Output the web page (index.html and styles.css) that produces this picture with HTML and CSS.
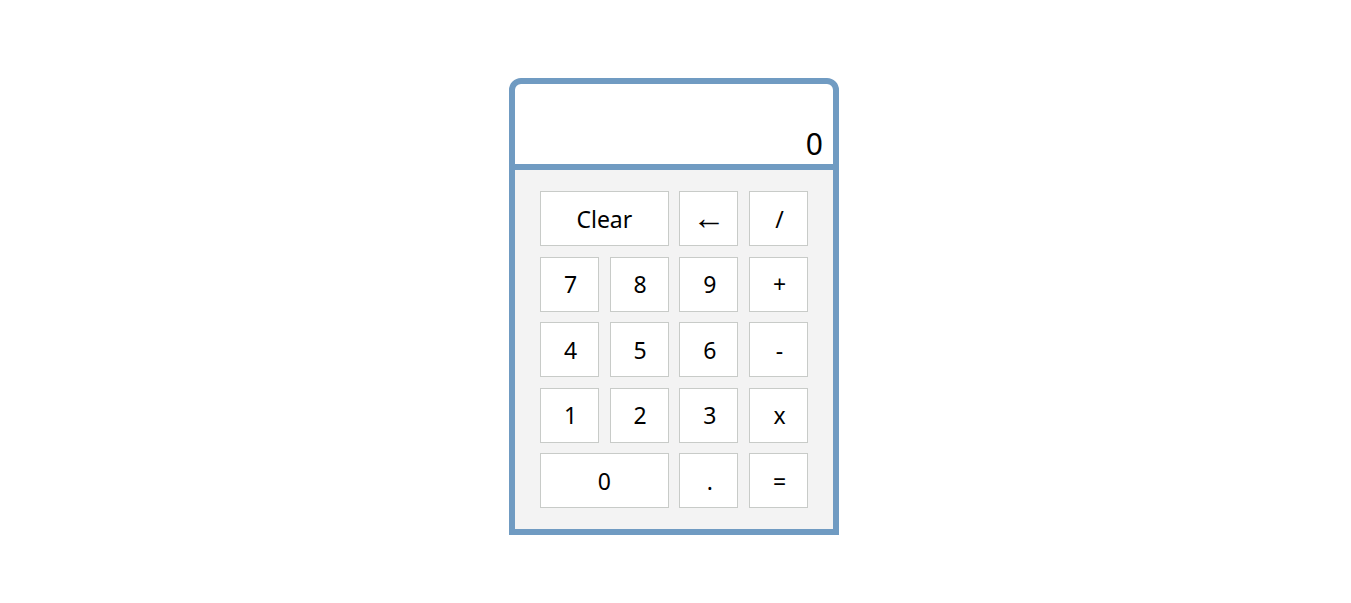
FILE: index.html
```html
<!DOCTYPE html>
<html>
<head>
<meta charset="utf-8">
<link rel="stylesheet" href="styles.css">
</head>
<body>
<div class="page">
  <div class="calc">
    <div class="display">0</div>
    <div class="keys">
      <button class="key wide">Clear</button>
      <button class="key arrow">←</button>
      <button class="key">/</button>
      <button class="key">7</button>
      <button class="key">8</button>
      <button class="key">9</button>
      <button class="key">+</button>
      <button class="key">4</button>
      <button class="key">5</button>
      <button class="key">6</button>
      <button class="key">-</button>
      <button class="key">1</button>
      <button class="key">2</button>
      <button class="key">3</button>
      <button class="key">x</button>
      <button class="key wide">0</button>
      <button class="key">.</button>
      <button class="key">=</button>
    </div>
  </div>
</div>
</body>
</html>
```
FILE: styles.css
```css
html, body {
  margin: 0;
  padding: 0;
  background: #fff;
}
.page {
  display: flex;
  justify-content: center;
  padding-top: 78px;
  font-family: "Noto Sans", "DejaVu Sans", sans-serif;
}
.calc {
  width: 318px;
  border: 6px solid #709bc2;
  border-radius: 12px 12px 0 0;
  margin-right: 3px;
}
.display {
  height: 86px;
  border-bottom: 6px solid #709bc2;
  display: flex;
  align-items: flex-end;
  justify-content: flex-end;
  padding-right: 10px;
  box-sizing: border-box;
  font-size: 30px;
  line-height: 1;
  padding-bottom: 5px;
  color: #000;
}
.keys {
  background: #f3f3f3;
  padding: 21px 25px;
  display: grid;
  grid-template-columns: repeat(4, 1fr);
  grid-auto-rows: 55px;
  column-gap: 10.67px;
  row-gap: 10.5px;
}
.key {
  background: #fff;
  border: 1px solid #c8cbc8;
  font-family: "Noto Sans", "DejaVu Sans", sans-serif;
  font-size: 23px;
  color: #000;
  padding: 0 0 0 2px;
  margin: 0;
}
.key.wide {
  grid-column: span 2;
  padding: 0;
}
.key.arrow {
  font-family: "Liberation Serif", "DejaVu Serif", serif;
  font-size: 33px;
  padding: 0;
  line-height: 1;
}
```
